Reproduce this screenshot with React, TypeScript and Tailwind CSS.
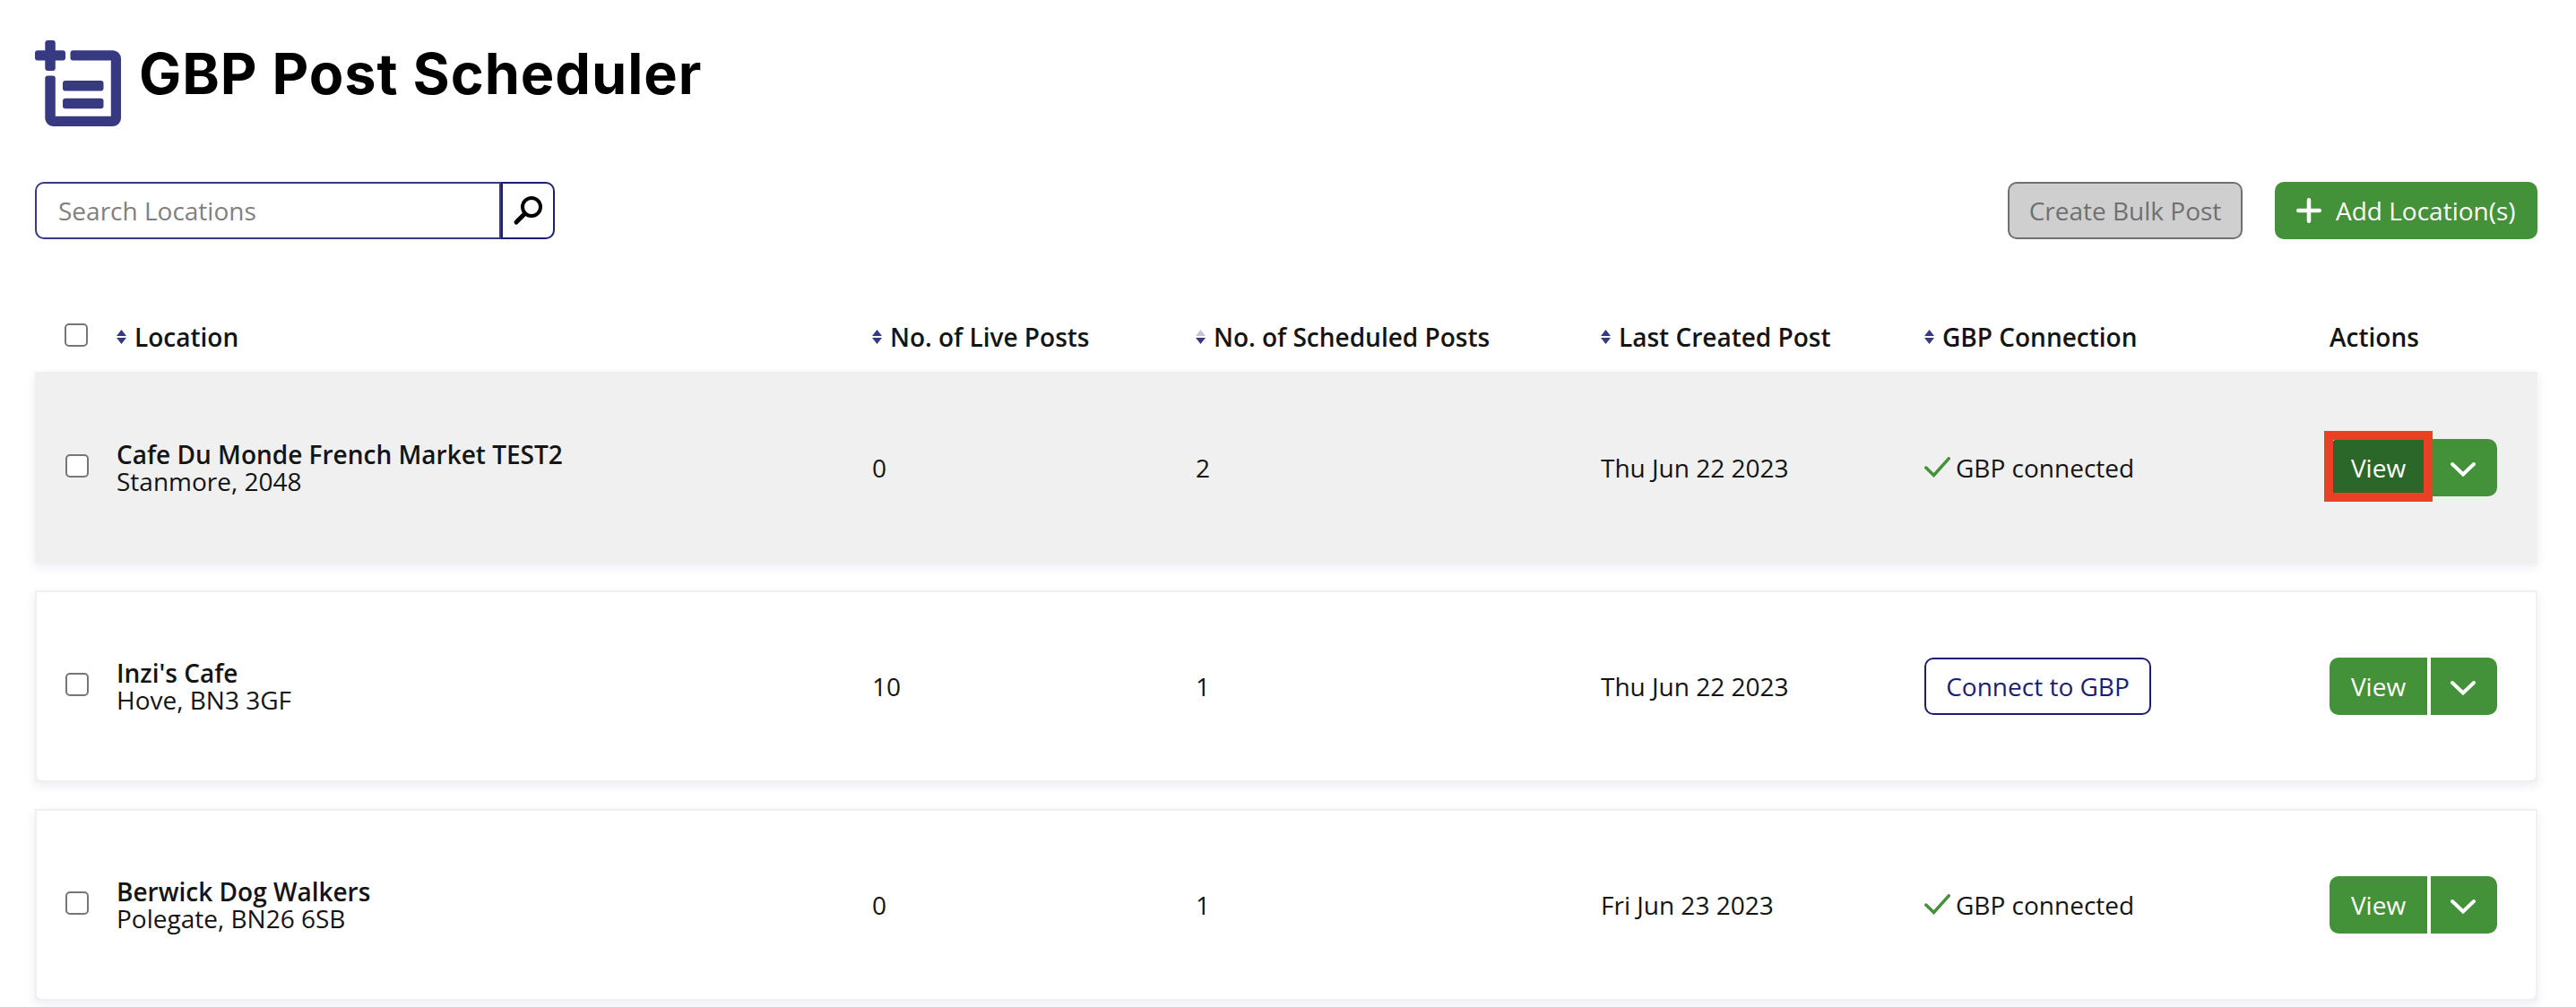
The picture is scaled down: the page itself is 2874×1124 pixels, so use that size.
import React from "react";
import clsx from "clsx";

interface Location {
  name: string;
  address: string;
  live: number;
  scheduled: number;
  lastCreated: string;
  connected: boolean;
  highlighted?: boolean;
}

const locations: Location[] = [
  {
    name: "Cafe Du Monde French Market TEST2",
    address: "Stanmore, 2048",
    live: 0,
    scheduled: 2,
    lastCreated: "Thu Jun 22 2023",
    connected: true,
    highlighted: true,
  },
  {
    name: "Inzi's Cafe",
    address: "Hove, BN3 3GF",
    live: 10,
    scheduled: 1,
    lastCreated: "Thu Jun 22 2023",
    connected: false,
  },
  {
    name: "Berwick Dog Walkers",
    address: "Polegate, BN26 6SB",
    live: 0,
    scheduled: 1,
    lastCreated: "Fri Jun 23 2023",
    connected: true,
  },
];

function PostIcon() {
  return (
    <svg width="96" height="96" viewBox="0 0 96 96" fill="#373a81" className="shrink-0">
      <rect x="11.3" y="0" width="11.5" height="34" rx="3" />
      <rect x="0" y="11.3" width="34" height="11.3" rx="3" />
      <path d="M42.5 11.3h44.5a9 9 0 0 1 9 9v66.7a9 9 0 0 1-9 9H20.3a9 9 0 0 1-9-9V42.5a3 3 0 0 1 3-3h5.5a3 3 0 0 1 3 3v42.300h62V22.6H42.5a3 3 0 0 1-3-3v-5.3a3 3 0 0 1 3-3z" />
      <rect x="31" y="45" width="45.5" height="11.5" rx="3" />
      <rect x="31" y="64.8" width="45.5" height="11.5" rx="3" />
    </svg>
  );
}

function SortIcon({ desc }: { desc?: boolean }) {
  return (
    <svg width="11" height="16" viewBox="0 0 11 16" fill="#373a81" className="mr-[9px] shrink-0">
      <path d="M5.5 0 11 7H0z" opacity={desc ? 0.3 : 1} />
      <path d="M5.5 16 0 9h11z" />
    </svg>
  );
}

function Checkbox({ className }: { className?: string }) {
  return (
    <input
      type="checkbox"
      className={clsx(
        "block size-[26px] appearance-none rounded-[5px] border-2 border-[#767676] bg-white",
        className
      )}
    />
  );
}

function HeaderCell({ label, desc }: { label: string; desc?: boolean }) {
  return (
    <div className="flex items-center whitespace-nowrap">
      <SortIcon desc={desc} />
      {label}
    </div>
  );
}

function LocationRow({ location }: { location: Location }) {
  return (
    <div className="h-[214px] bg-[#f0f0f0] p-[2px] shadow-[0_4px_10px_rgba(55,58,129,0.09)]">
      <div
        className={clsx(
          "grid h-full grid-cols-[89px_843px_361px_452px_361px_452px_1fr] items-center rounded-b-[6px]",
          location.highlighted ? "bg-[#f0f0f0]" : "bg-white"
        )}
      >
        <Checkbox className="mb-1 ml-8" />
        <div className="leading-[30px]">
          <p className="font-semibold">{location.name}</p>
          <p>{location.address}</p>
        </div>
        <p>{location.live}</p>
        <p>{location.scheduled}</p>
        <p>{location.lastCreated}</p>
        <div>
          {location.connected ? (
            <div className="flex items-center">
              <svg width="29" height="23" viewBox="0 0 29 23" fill="none" className="mr-[6px] mb-[2px]">
                <path d="M1.8 12 10.5 20.5 27.2 1.8" stroke="#439139" strokeWidth="3.5" strokeLinecap="round" />
              </svg>
              GBP connected
            </div>
          ) : (
            <button className="h-16 w-[253px] rounded-[10px] border-2 border-[#1b1e72] text-[#1b1e72]">
              Connect to GBP
            </button>
          )}
        </div>
        <div className="relative flex gap-1 text-white">
          <button
            className={clsx(
              "h-16 w-[109px] rounded-l-[10px]",
              location.highlighted ? "bg-[#2c672a]" : "bg-[#439139]"
            )}
          >
            View
          </button>
          <button className="flex h-16 w-[74px] items-center justify-center rounded-r-[10px] bg-[#439139]">
            <svg width="30" height="18" viewBox="0 0 30 18" fill="none" className="mt-1 mr-[2px]">
              <path d="m3 3 12 11.5L27 3" stroke="white" strokeWidth="4" strokeLinecap="round" />
            </svg>
          </button>
          {location.highlighted && (
            <div className="absolute -top-[9px] -left-[6px] h-[79px] w-[121px] border-[10px] border-[#ea4025]" />
          )}
        </div>
      </div>
    </div>
  );
}

export default function App() {
  return (
    <div className="h-[1124px] overflow-hidden bg-white pr-[43px] pl-[39px] font-['Open_Sans',sans-serif] text-[28px] text-[#141414]">
      <header className="flex pt-[45px]">
        <PostIcon />
        <h1 className="ml-5 font-['Inter',sans-serif] text-[63px] leading-[74px] font-bold tracking-[0.95px] whitespace-nowrap text-black">
          GBP Post Scheduler
        </h1>
      </header>

      <div className="mt-[62px] flex h-16 items-center">
        <div className="flex h-16 w-[520px] rounded-l-[10px] border-2 border-[#373a81]">
          <input
            placeholder="Search Locations"
            className="w-full rounded-l-[8px] pl-6 placeholder:text-[#808080]"
          />
        </div>
        <button className="flex h-16 w-[60px] shrink-0 items-center justify-center rounded-r-[10px] border-2 border-[#1b1e72]">
          <svg width="34" height="34" viewBox="0 0 34 34" fill="none" stroke="black">
            <circle cx="21" cy="13" r="10" strokeWidth="4" />
            <path d="M13.5 20.5 4 30" strokeWidth="5" strokeLinecap="round" />
          </svg>
        </button>
        <button className="ml-auto h-16 w-[262px] rounded-[10px] border-2 border-[#707070] bg-[#cfcfcf] text-[#707070]">
          Create Bulk Post
        </button>
        <button className="ml-9 flex h-16 w-[293px] items-center rounded-[10px] bg-[#439139] pl-6 whitespace-nowrap text-white">
          <svg width="28" height="28" viewBox="0 0 28 28" stroke="white" strokeWidth="4.5" strokeLinecap="round" className="mr-4">
            <path d="M14 2.25v23.5M2.25 14h23.5" />
          </svg>
          Add Location(s)
        </button>
      </div>

      <div className="mt-[70px] grid h-[78px] grid-cols-[91px_843px_361px_452px_361px_452px_1fr] items-center font-semibold">
        <Checkbox className="mb-1 ml-[33px]" />
        <HeaderCell label="Location" />
        <HeaderCell label="No. of Live Posts" />
        <HeaderCell label="No. of Scheduled Posts" desc />
        <HeaderCell label="Last Created Post" />
        <HeaderCell label="GBP Connection" />
        <div>Actions</div>
      </div>

      <div className="flex flex-col gap-[30px]">
        {locations.map((location) => (
          <LocationRow key={location.name} location={location} />
        ))}
      </div>
    </div>
  );
}
